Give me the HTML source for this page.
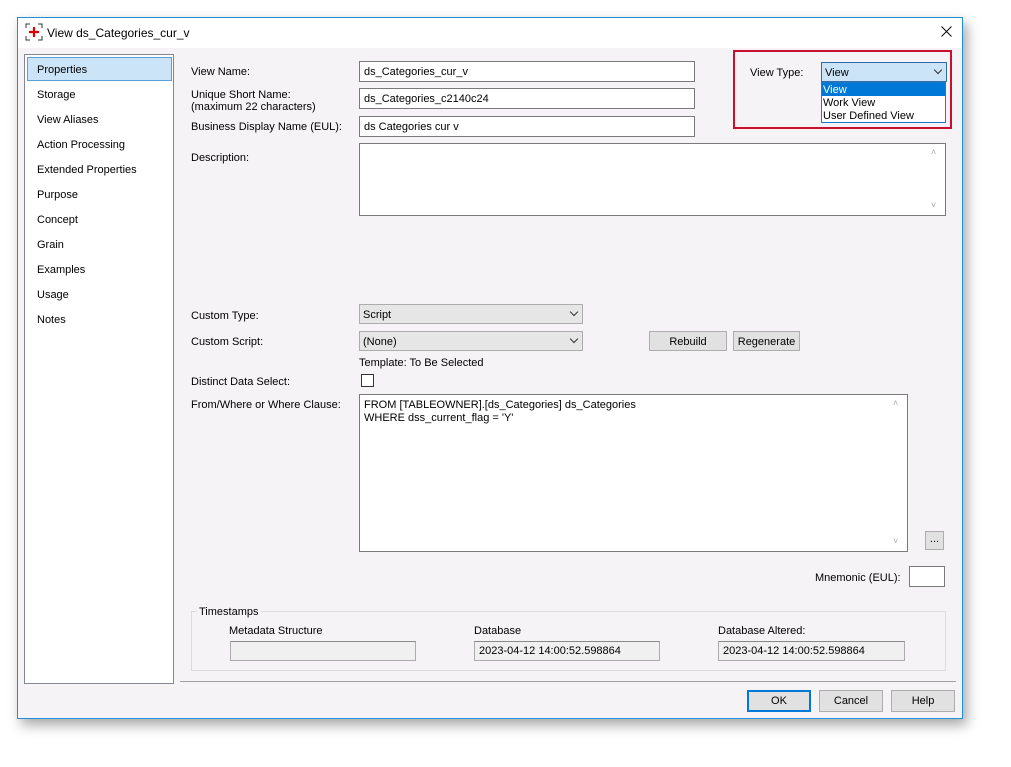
<!DOCTYPE html>
<html><head><style>
*{box-sizing:border-box;margin:0;padding:0}
body{width:1011px;height:767px;background:#fff;font-family:"Liberation Sans",sans-serif;font-size:11px;color:#000;position:relative;overflow:hidden}
.a{position:absolute}
.win{left:17px;top:17px;width:946px;height:702px;border:1px solid #1f8fd8;background:#f6f3f6;box-shadow:4px 6px 12px rgba(0,0,0,.35)}
.tb{left:18px;top:18px;width:944px;height:30px;background:#fff}
.in{position:absolute;background:#fff;border:1px solid #7a7a7a;padding:4px 4px 2px;font-size:11px}
.cb{position:absolute;background:#e6e6e6;border:1px solid #adadad;padding:4px 3px 2px;font-size:11px}
.btn{position:absolute;background:#e1e1e1;border:1px solid #adadad;text-align:center;line-height:20px;font-size:11px}
.chev{position:absolute;right:5px;top:4px;width:6px;height:6px;border-right:1px solid #333;border-bottom:1px solid #333;transform:rotate(45deg)}
.li{position:absolute;left:37px}
.ro{position:absolute;background:#f0f0f0;border:1px solid #adadad;border-top-color:#888;padding:3px 4px 1px}
</style></head><body>
<div class="a win"></div>
<div class="a tb"></div>
<svg class="a" style="left:25px;top:23px" width="18" height="18"><path d="M1 5V1h4M13 1h4v4M17 13v4h-4M5 17H1v-4" fill="none" stroke="#333"/><path d="M9 4v10M4 9h10" stroke="#d00" stroke-width="2.2"/></svg>
<div class="a" style="left:47px;top:26px;font-size:12px">View ds_Categories_cur_v</div>
<svg class="a" style="left:941px;top:26px" width="11" height="11"><path d="M0.5 0.5L10.5 10.5M10.5 0.5L0.5 10.5" stroke="#111" stroke-width="1.1"/></svg>

<div class="a" style="left:24px;top:54px;width:150px;height:630px;background:#fff;border:1px solid #828790"></div>
<div class="a" style="left:27px;top:57px;width:145px;height:24px;background:#cce4f7;border:1px solid #5aa0d8"></div>
<div class="li" style="top:64px">Properties</div>
<div class="li" style="top:89px">Storage</div>
<div class="li" style="top:114px">View Aliases</div>
<div class="li" style="top:139px">Action Processing</div>
<div class="li" style="top:164px">Extended Properties</div>
<div class="li" style="top:189px">Purpose</div>
<div class="li" style="top:214px">Concept</div>
<div class="li" style="top:239px">Grain</div>
<div class="li" style="top:264px">Examples</div>
<div class="li" style="top:289px">Usage</div>
<div class="li" style="top:314px">Notes</div>

<div class="a" style="left:191px;top:66px">View Name:</div>
<div class="a" style="left:191px;top:89px;line-height:12px">Unique Short Name:<br>(maximum 22 characters)</div>
<div class="a" style="left:191px;top:121px">Business Display Name (EUL):</div>
<div class="a" style="left:191px;top:152px">Description:</div>
<div class="in" style="left:359px;top:61px;width:336px;height:21px">ds_Categories_cur_v</div>
<div class="in" style="left:359px;top:88px;width:336px;height:21px">ds_Categories_c2140c24</div>
<div class="in" style="left:359px;top:116px;width:336px;height:21px">ds Categories cur v</div>
<div class="in" style="left:359px;top:143px;width:587px;height:73px"></div>
<div class="a" style="left:931px;top:147px;color:#aaa;font-size:9px">˄</div>
<div class="a" style="left:931px;top:200px;color:#aaa;font-size:9px">˅</div>

<div class="a" style="left:733px;top:50px;width:219px;height:79px;border:2px solid #c8102e"></div>
<div class="a" style="left:750px;top:67px">View Type:</div>
<div class="a" style="left:821px;top:62px;width:126px;height:20px;background:#cce4f7;border:1px solid #2d6da3;padding:4px 3px 2px">View<div class="chev"></div></div>
<div class="a" style="left:821px;top:82px;width:125px;height:41px;background:#fff;border:1px solid #1e78c8"></div>
<div class="a" style="left:822px;top:83px;width:123px;height:13px;background:#0078d7;color:#fff;padding-left:1px;line-height:14px">View</div>
<div class="a" style="left:823px;top:97px">Work View</div>
<div class="a" style="left:823px;top:110px">User Defined View</div>

<div class="a" style="left:191px;top:310px">Custom Type:</div>
<div class="a" style="left:191px;top:336px">Custom Script:</div>
<div class="cb" style="left:359px;top:304px;width:224px;height:20px">Script<div class="chev"></div></div>
<div class="cb" style="left:359px;top:331px;width:224px;height:20px">(None)<div class="chev"></div></div>
<div class="btn" style="left:649px;top:331px;width:78px;height:20px">Rebuild</div>
<div class="btn" style="left:733px;top:331px;width:67px;height:20px">Regenerate</div>
<div class="a" style="left:359px;top:357px">Template: To Be Selected</div>
<div class="a" style="left:191px;top:376px">Distinct Data Select:</div>
<div class="a" style="left:361px;top:374px;width:13px;height:13px;background:#fff;border:1px solid #333"></div>
<div class="a" style="left:191px;top:399px">From/Where or Where Clause:</div>
<div class="in" style="left:359px;top:394px;width:549px;height:158px;line-height:13px;padding-top:4px">FROM [TABLEOWNER].[ds_Categories] ds_Categories<br>WHERE dss_current_flag = 'Y'</div>
<div class="a" style="left:893px;top:398px;color:#aaa;font-size:9px">˄</div>
<div class="a" style="left:893px;top:536px;color:#aaa;font-size:9px">˅</div>
<div class="btn" style="left:925px;top:531px;width:19px;height:19px;line-height:14px">...</div>
<div class="a" style="left:815px;top:572px">Mnemonic (EUL):</div>
<div class="in" style="left:909px;top:566px;width:36px;height:21px"></div>

<div class="a" style="left:191px;top:611px;width:755px;height:60px;border:1px solid #dcdcdc"></div>
<div class="a" style="left:197px;top:606px;background:#f6f3f6;padding:0 2px">Timestamps</div>
<div class="a" style="left:229px;top:625px">Metadata Structure</div>
<div class="a" style="left:474px;top:625px">Database</div>
<div class="a" style="left:718px;top:625px">Database Altered:</div>
<div class="ro" style="left:230px;top:641px;width:186px;height:20px"></div>
<div class="ro" style="left:474px;top:641px;width:186px;height:20px">2023-04-12 14:00:52.598864</div>
<div class="ro" style="left:718px;top:641px;width:187px;height:20px">2023-04-12 14:00:52.598864</div>

<div class="a" style="left:180px;top:681px;width:776px;height:1px;background:#a0a0a0"></div>
<div class="btn" style="left:747px;top:690px;width:64px;height:22px;border:2px solid #0078d7;line-height:19px">OK</div>
<div class="btn" style="left:819px;top:690px;width:64px;height:22px">Cancel</div>
<div class="btn" style="left:891px;top:690px;width:64px;height:22px">Help</div>
</body></html>
